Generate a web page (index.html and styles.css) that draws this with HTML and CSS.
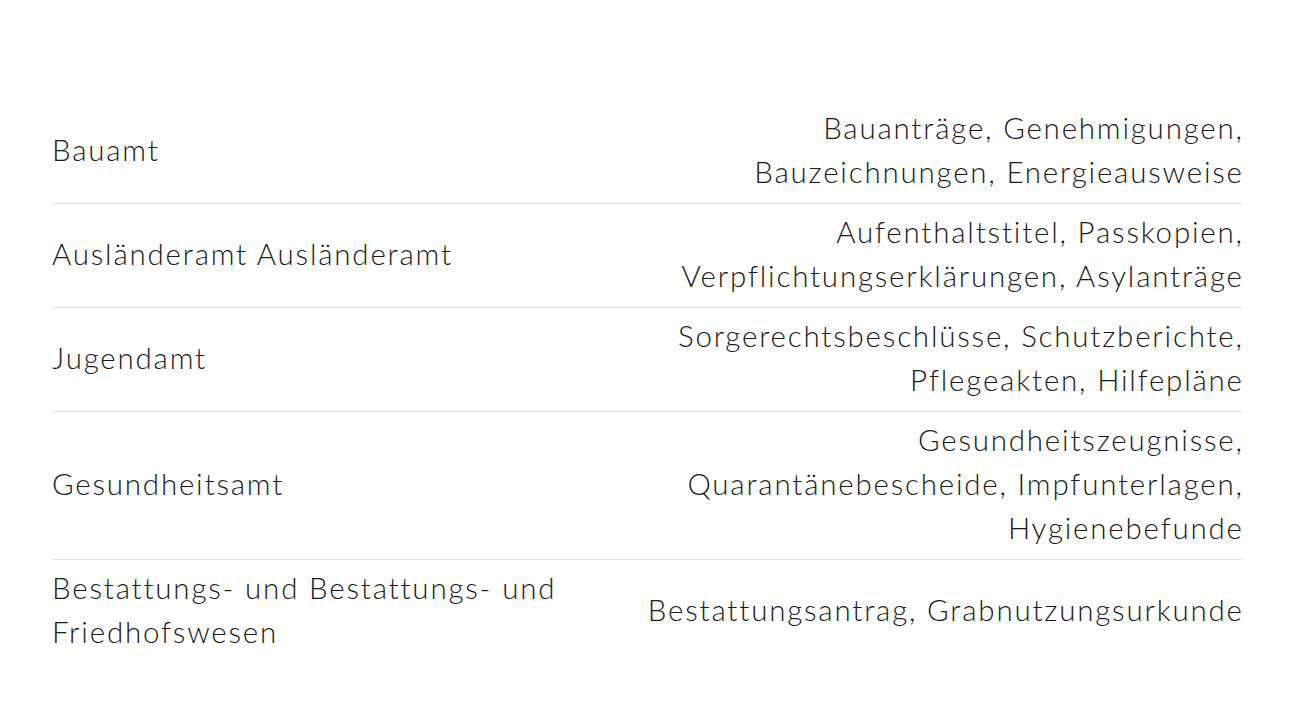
FILE: index.html
```html
<!DOCTYPE html>
<html lang="de">
<head>
<meta charset="utf-8">
<link rel="stylesheet" href="styles.css">
</head>
<body>
<div class="page">
  <div class="table">
    <div class="row">
      <div class="cell office">Bauamt</div>
      <div class="cell docs">Bauanträge, Genehmigungen, Bauzeichnungen, Energieausweise</div>
    </div>
    <div class="row">
      <div class="cell office">Ausländeramt Ausländeramt</div>
      <div class="cell docs">Aufenthaltstitel, Passkopien, Verpflichtungserklärungen, Asylanträge</div>
    </div>
    <div class="row">
      <div class="cell office">Jugendamt</div>
      <div class="cell docs">Sorgerechtsbeschlüsse, Schutzberichte, Pflegeakten, Hilfepläne</div>
    </div>
    <div class="row">
      <div class="cell office">Gesundheitsamt</div>
      <div class="cell docs">Gesundheitszeugnisse, Quarantänebescheide, Impfunterlagen, Hygienebefunde</div>
    </div>
    <div class="row">
      <div class="cell office">Bestattungs- und Bestattungs- und Friedhofswesen</div>
      <div class="cell docs">Bestattungsantrag, Grabnutzungsurkunde</div>
    </div>
  </div>
</div>
</body>
</html>
```

FILE: styles.css
```css
html, body {
  margin: 0;
  padding: 0;
  background: #ffffff;
}
body {
  font-family: "Lato", "Liberation Sans", sans-serif;
  font-weight: 300;
  color: #1a1a1a;
}
.page {
  padding: 100px 54px 0 52px;
}
.table {
  display: flex;
  flex-direction: column;
}
.row {
  display: grid;
  grid-template-columns: 1fr 620px;
  align-items: center;
  border-bottom: 1px solid #e2e2e2;
}
.row:last-child {
  border-bottom: none;
}
.cell {
  padding: 6px 0 9px;
  font-size: 29.5px;
  line-height: 44px;
  letter-spacing: 1.8px;
}
.office {
  padding-right: 20px;
}
.docs {
  text-align: right;
  margin-right: -1.8px;
}
```
